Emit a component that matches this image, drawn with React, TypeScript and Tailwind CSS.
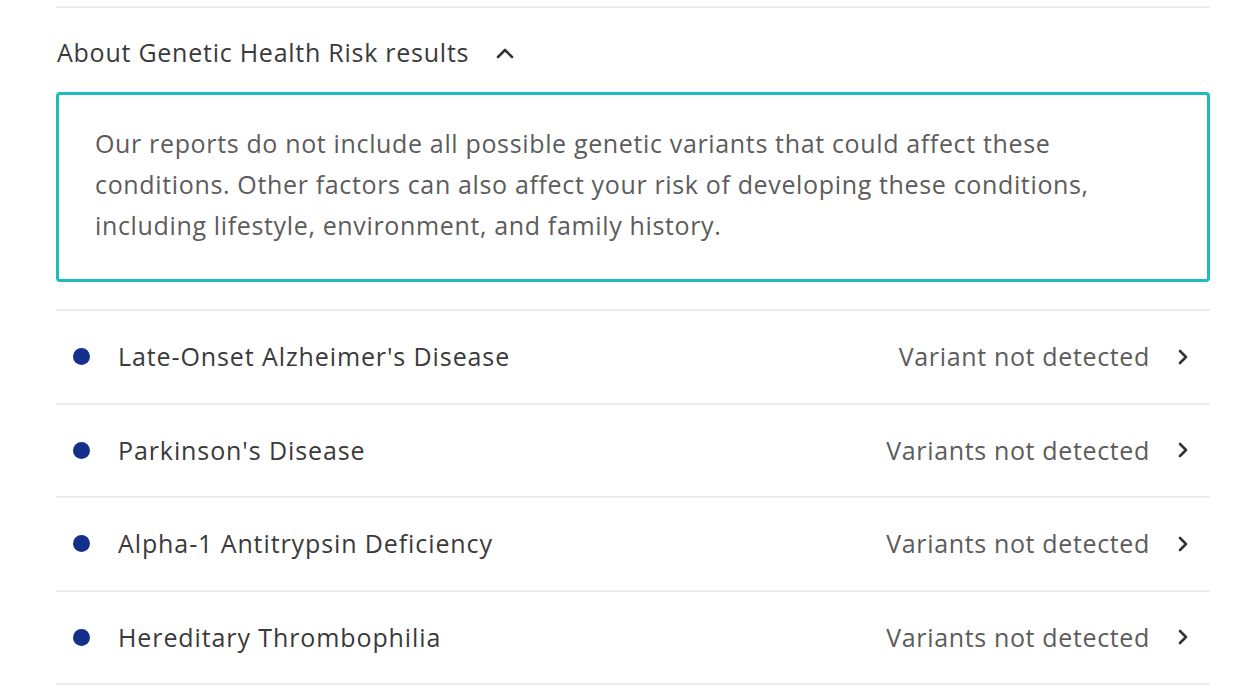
import React from 'react';

const ChevronRight = () => (
    <svg className="w-[14px] h-[18px]" viewBox="0 0 14 18" fill="none">
        <path d="M4 3 L10 9 L4 15" stroke="#333" strokeWidth="2.6" strokeLinecap="round" strokeLinejoin="round" />
    </svg>
);

const ChevronUp = () => (
    <svg className="w-[20px] h-[14px]" viewBox="0 0 20 14" fill="none">
        <path d="M3 11 L10 4 L17 11" stroke="#333" strokeWidth="2.6" strokeLinecap="round" strokeLinejoin="round" />
    </svg>
);

const conditions = [
    { name: "Late-Onset Alzheimer's Disease", result: 'Variant not detected' },
    { name: "Parkinson's Disease", result: 'Variants not detected' },
    { name: 'Alpha-1 Antitrypsin Deficiency', result: 'Variants not detected' },
    { name: 'Hereditary Thrombophilia', result: 'Variants not detected' },
];

export default function App() {
    return (
        <div className="w-[1240px] h-[698px] bg-white overflow-hidden font-['Open_Sans',sans-serif]">
            <div className="ml-[56px] w-[1154px] pt-[6px]">
                <div className="h-[2px] bg-[#ebebeb]"></div>

                {/* Accordion header */}
                <div className="flex items-center gap-[26px] h-[84px] pl-[1px] pt-[6px]">
                    <span className="text-[25px] tracking-[0.75px] text-[#3a3a3a]">About Genetic Health Risk results</span>
                    <ChevronUp />
                </div>

                {/* Info box */}
                <div className="border-[3px] border-[#1cbcbc] rounded-[4px] h-[190px] pl-[36px] pt-[28px]">
                    <p className="text-[25px] leading-[41px] tracking-[0.65px] text-[#5c5c5c]">
                        Our reports do not include all possible genetic variants that could affect these<br />
                        conditions. Other factors can also affect your risk of developing these conditions,<br />
                        including lifestyle, environment, and family history.
                    </p>
                </div>

                {/* Condition list */}
                <div className="mt-[27px] border-t-[2px] border-[#ebebeb]">
                    {conditions.map((c, i) => (
                        <div key={i} className="flex items-center h-[93.5px] border-b-[2px] border-[#ebebeb] pl-[17px] pr-[20px]">
                            <span className="w-[17px] h-[17px] rounded-full bg-[#15308c] shrink-0"></span>
                            <span className="ml-[28px] text-[25px] tracking-[0.9px] text-[#3a3a3a]">{c.name}</span>
                            <span className="ml-auto text-[25px] tracking-[0.65px] text-[#5c5c5c]">{c.result}</span>
                            <span className="ml-[26px] flex items-center"><ChevronRight /></span>
                        </div>
                    ))}
                </div>
            </div>
        </div>
    );
}
